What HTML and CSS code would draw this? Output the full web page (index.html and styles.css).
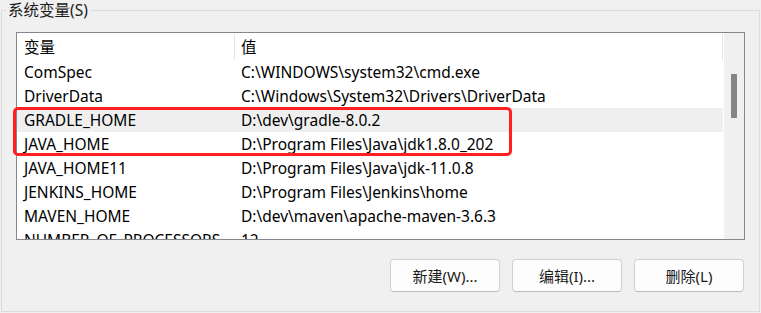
FILE: index.html
```html
<!DOCTYPE html>
<html lang="zh-CN">
<head>
<meta charset="utf-8">
<title>系统变量</title>
<link rel="stylesheet" href="styles.css">
</head>
<body>
<div class="group">
  <div class="group-title">系统变量(S)</div>
  <div class="list-wrap">
    <div class="list">
      <div class="table">
        <div class="row head">
          <div class="cell name">变量</div>
          <div class="cell value">值</div>
        </div>
        <div class="row"><div class="cell name">ComSpec</div><div class="cell value">C:\WINDOWS\system32\cmd.exe</div></div>
        <div class="row"><div class="cell name">DriverData</div><div class="cell value">C:\Windows\System32\Drivers\DriverData</div></div>
        <div class="row hover"><div class="cell name">GRADLE_HOME</div><div class="cell value">D:\dev\gradle-8.0.2</div></div>
        <div class="row"><div class="cell name">JAVA_HOME</div><div class="cell value">D:\Program Files\Java\jdk1.8.0_202</div></div>
        <div class="row"><div class="cell name">JAVA_HOME11</div><div class="cell value">D:\Program Files\Java\jdk-11.0.8</div></div>
        <div class="row"><div class="cell name">JENKINS_HOME</div><div class="cell value">D:\Program Files\Jenkins\home</div></div>
        <div class="row"><div class="cell name">MAVEN_HOME</div><div class="cell value">D:\dev\maven\apache-maven-3.6.3</div></div>
        <div class="row"><div class="cell name">NUMBER_OF_PROCESSORS</div><div class="cell value">12</div></div>
      </div>
      <div class="scrollbar"><div class="thumb"></div></div>
    </div>
    <div class="highlight-box"></div>
  </div>
  <div class="buttons">
    <button class="btn">新建(W)...</button>
    <button class="btn">编辑(I)...</button>
    <button class="btn">删除(L)</button>
  </div>
</div>
</body>
</html>
```
FILE: styles.css
```css
* { box-sizing: border-box; }
html, body {
  margin: 0;
  padding: 0;
  background: #f0f0f0;
  font-family: "Noto Sans", "Noto Sans CJK SC", sans-serif;
  font-size: 15.5px;
  color: #000;
  overflow: hidden;
}
.group {
  position: relative;
  margin: 10px 1px 0 1px;
  height: 302px;
  border: 1px solid #dcdcdc;
  padding: 21px 14px 0 14px;
}
.group-title {
  position: absolute;
  left: 4px;
  top: -11px;
  padding: 0 2px;
  background: #f0f0f0;
  line-height: 20px;
  color: #1a1a1a;
}
.list-wrap {
  position: relative;
}
.list {
  display: flex;
  height: 208px;
  border: 1px solid #828790;
  background: #fff;
  overflow: hidden;
}
.table {
  flex: 1;
  overflow: hidden;
}
.row {
  display: flex;
  height: 24px;
  align-items: center;
  white-space: nowrap;
}
.row.head {
  height: 27px;
}
.row.hover {
  background: #efefef;
}
.cell.name {
  width: 217px;
  padding-left: 7px;
  overflow: hidden;
}
.cell.value {
  flex: 1;
  padding-left: 7px;
}
.head .cell {
  height: 26px;
  display: flex;
  align-items: center;
}
.head .cell.value {
  border-left: 1px solid #e5e5e5;
  border-right: 1px solid #e5e5e5;
  padding-left: 6px;
}
.scrollbar {
  width: 21px;
  background: #f0f0f0;
  border-left: 1px solid #fff;
  position: relative;
  padding-top: 41px;
  display: flex;
  justify-content: center;
}
.thumb {
  width: 6px;
  height: 44px;
  background: #858585;
}
.highlight-box {
  position: absolute;
  left: -3px;
  top: 75px;
  width: 499px;
  height: 49px;
  border: 3px solid #ff1f1f;
  border-radius: 5px;
}
.buttons {
  display: flex;
  justify-content: flex-end;
  gap: 12px;
  margin-top: 19px;
  padding-right: 1px;
}
.btn {
  width: 110px;
  height: 33px;
  background: #fdfdfd;
  border: 1px solid #d0d0d0;
  border-bottom-color: #bdbdbd;
  border-radius: 4px;
  font-family: "Noto Sans", "Noto Sans CJK SC", sans-serif;
  font-size: 15px;
  color: #1a1a1a;
  padding: 0;
}
```
